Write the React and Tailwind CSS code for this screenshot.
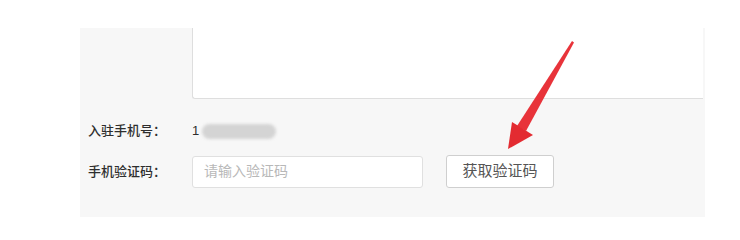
const font = { fontFamily: '"Liberation Sans", "Noto Sans CJK SC", sans-serif' };

const Arrow = () => (
  <svg
    className="absolute left-[500px] top-[38px]"
    width="80"
    height="116"
    viewBox="0 0 80 116"
  >
    {/* shaft, tapering toward the tail */}
    <polygon points="72,3 74,4.5 26,93 17,88" fill="#e8333a" />
    <polygon points="12,84 33,97 8,111" fill="#e32b31" />
  </svg>
);

export default function App() {
  return (
    <div className="relative w-[740px] h-[233px] bg-white overflow-hidden" style={font}>
      <div className="ml-[80px] mt-[28px] w-[625px] h-[189px] bg-[#f7f7f7]">
        <div className="ml-[112px] w-[511px] h-[71px] bg-white border-l border-b border-[#dedede] rounded-bl-[3px]" />

        <div className="flex items-center h-[22px] mt-[21px]">
          <div className="w-[112px] pl-[8px] text-[13px] font-medium text-[#2e2e2e]">入驻手机号：</div>
          <div className="flex items-center text-[13px] font-medium text-[#2e2e2e]">
            <span>1</span>
            <span className="ml-[3px] w-[74px] h-[15px] rounded-full bg-[#d4d4d4] blur-[1.5px]" />
          </div>
        </div>

        <div className="flex items-center mt-[13px]">
          <div className="w-[112px] pl-[8px] text-[13px] font-medium text-[#2e2e2e]">手机验证码：</div>
          <div className="w-[231px] h-[32px] bg-white border border-[#e0e0e0] rounded-[3px] flex items-center pl-[11px] text-[14px] text-[#b8b8b8]">
            请输入验证码
          </div>
          <button className="ml-[23px] w-[108px] h-[33px] bg-white border border-[#cfcfcf] rounded-[3px] text-[15px] text-[#555]">
            获取验证码
          </button>
        </div>
      </div>
      <Arrow />
    </div>
  );
}
